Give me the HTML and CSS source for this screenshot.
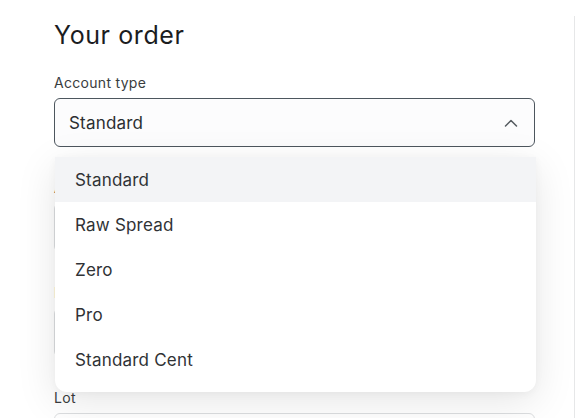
FILE: index.html
```html
<!DOCTYPE html>
<html lang="en">
<head>
<meta charset="utf-8">
<title>Your order</title>
<link rel="stylesheet" href="styles.css">
</head>
<body>
<div class="panel">
  <div class="content">
    <h1 class="title">Your order</h1>

    <div class="group">
      <div class="label">Account type</div>
      <div class="select-wrap">
        <div class="select">
          <span class="select-value">Standard</span>
          <svg class="chevron" width="14" height="8" viewBox="0 0 14 8" aria-hidden="true">
            <path d="M1.5 7 L7 1.5 L12.5 7" fill="none" stroke="#555b60" stroke-width="1.5" stroke-linecap="round" stroke-linejoin="round"/>
          </svg>
        </div>
        <ul class="menu">
          <li class="option active">Standard</li>
          <li class="option">Raw Spread</li>
          <li class="option">Zero</li>
          <li class="option">Pro</li>
          <li class="option">Standard Cent</li>
        </ul>
      </div>
    </div>

    <div class="group">
      <div class="label">Account currency</div>
      <div class="input"></div>
    </div>

    <div class="group">
      <div class="label">Leverage</div>
      <div class="input"></div>
    </div>

    <div class="group">
      <div class="label">Lot</div>
      <div class="input light"></div>
    </div>
  </div>
</div>
</body>
</html>
```

FILE: styles.css
```css
* { box-sizing: border-box; }

html, body {
  margin: 0;
  padding: 0;
  background: #ffffff;
  overflow: hidden;
  height: 418px;
}

body {
  font-family: "Inter", "Liberation Sans", sans-serif;
  color: #2b2e31;
}

.panel {
  margin-top: 16px;
  width: 575px;
  height: 402px;
  overflow: hidden;
  border-right: 1px solid #e6e7e8;
}

.content {
  padding: 3px 0 0 54px;
  width: 535px;
}

.title {
  margin: 0;
  font-family: "Inter", "Liberation Sans", sans-serif;
  font-weight: 400;
  font-size: 25px;
  line-height: 32px;
  color: #1b1d1f;
  letter-spacing: 0.6px;
}

.group {
  margin-top: 22px;
}
.group + .group {
  margin-top: 31px;
}

.label {
  font-size: 14px;
  line-height: 20px;
  color: #3a3d40;
  letter-spacing: 0.3px;
  margin-bottom: 5px;
}

.select-wrap {
  position: relative;
}

.select {
  height: 49px;
  border: 1px solid #4d565e;
  border-radius: 6px;
  background: #fcfcfd;
  display: flex;
  align-items: center;
  justify-content: space-between;
  padding: 0 16px 0 14px;
}

.select-value {
  font-size: 17px;
  letter-spacing: 0.2px;
  color: #2b2e31;
}

.chevron {
  display: block;
}

.input {
  height: 49px;
  border: 1px solid #dcdee0;
  border-radius: 6px;
  background: #ffffff;
}

.menu {
  position: absolute;
  left: 1px;
  top: 59px;
  width: 481px;
  margin: 0;
  padding: 0 0 10px 0;
  list-style: none;
  background: #ffffff;
  border-radius: 0 0 12px 12px;
  box-shadow: 0 10px 40px rgba(0, 0, 0, 0.10), 0 2px 8px rgba(0, 0, 0, 0.04);
  z-index: 10;
}

.option {
  height: 45px;
  display: flex;
  align-items: center;
  padding-left: 20px;
  font-size: 17px;
  letter-spacing: 0.2px;
  color: #2f3235;
}

.option.active {
  background: #f3f4f6;
}
```
